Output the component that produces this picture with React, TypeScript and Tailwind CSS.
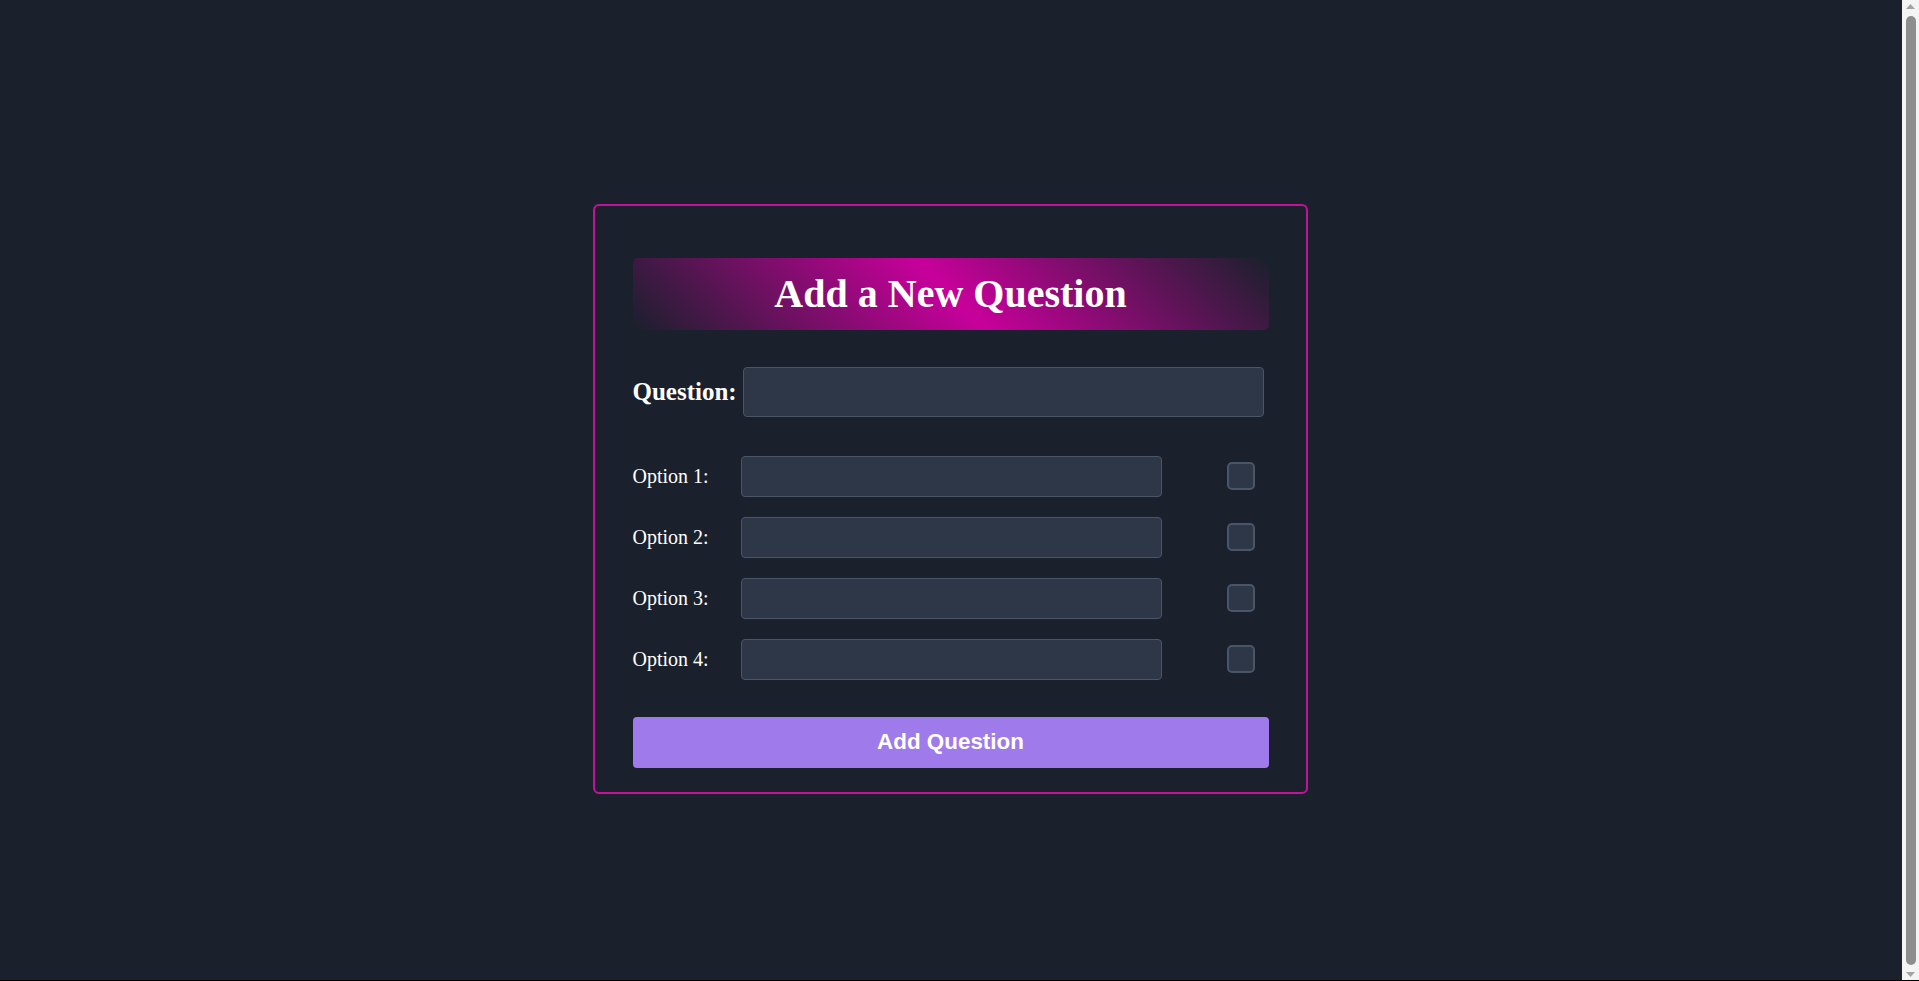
import React from "react";

const serif = { fontFamily: '"Liberation Serif", "Times New Roman", serif' };

function OptionRow({ n }: { n: number }) {
  return (
    <div className="flex items-center h-[41px]">
      <label className="w-[108px] shrink-0 text-[20px] text-white leading-none" style={serif}>
        Option {n}:
      </label>
      <input
        type="text"
        className="w-[421px] h-[41px] shrink-0 rounded-[4px] border border-[#4a5568] bg-[#2d3748] text-white outline-none"
      />
      <div className="ml-[65px] w-[28px] h-[28px] shrink-0 rounded-[5px] border-2 border-[#4a5568] bg-[#2d3748]" />
    </div>
  );
}

function FakeScrollbar() {
  return (
    <div className="fixed right-0 top-0 h-screen w-[17px] bg-[#f4f4f4] flex flex-col items-center">
      <svg width="17" height="14" viewBox="0 0 17 14" className="shrink-0">
        <polygon points="4,9 13,9 8.5,4" fill="#a3a3a3" />
      </svg>
      <div className="flex-1 w-[10px] rounded-full bg-[#8d8d8d] my-[2px]" />
      <svg width="17" height="14" viewBox="0 0 17 14" className="shrink-0">
        <polygon points="4,5 13,5 8.5,10" fill="#a3a3a3" />
      </svg>
    </div>
  );
}

export default function App() {
  return (
    <div className="bg-[#1a202c] pt-2 pb-2 pl-2 pr-[27px]">
      <div className="min-h-screen flex items-center justify-center">
        <div className="w-[715px] rounded-[6px] border-2 border-[#c5129a] bg-[#1a202c] pt-[52px] pb-6 pl-[38px] pr-[37px]">
          <div className="h-[72px] rounded-[5px] flex items-center justify-center bg-[linear-gradient(45deg,#1a202c_0%,#c8009b_50%,#1a202c_100%)]">
            <h2 className="text-[40px] font-bold text-white leading-none" style={serif}>
              Add a New Question
            </h2>
          </div>

          <div className="mt-[37px] flex items-center h-[50px]">
            <label className="w-[102px] shrink-0 text-[25px] font-bold text-white leading-none whitespace-nowrap" style={serif}>
              Question:
            </label>
            <input
              type="text"
              className="ml-2 w-[521px] h-[50px] rounded-[4px] border border-[#4a5568] bg-[#2d3748] text-white outline-none"
            />
          </div>

          <div className="mt-[39px] flex flex-col gap-[20px]">
            <OptionRow n={1} />
            <OptionRow n={2} />
            <OptionRow n={3} />
            <OptionRow n={4} />
          </div>

          <button
            type="button"
            className="mt-[37px] w-full h-[51px] rounded-[4px] bg-[#9f7aea] text-white font-bold text-[22.4px]"
            style={{ fontFamily: '"Liberation Sans", Arial, sans-serif' }}
          >
            Add Question
          </button>
        </div>
      </div>
      <FakeScrollbar />
      <div className="fixed left-0 right-0 bottom-0 h-px bg-black" />
    </div>
  );
}
